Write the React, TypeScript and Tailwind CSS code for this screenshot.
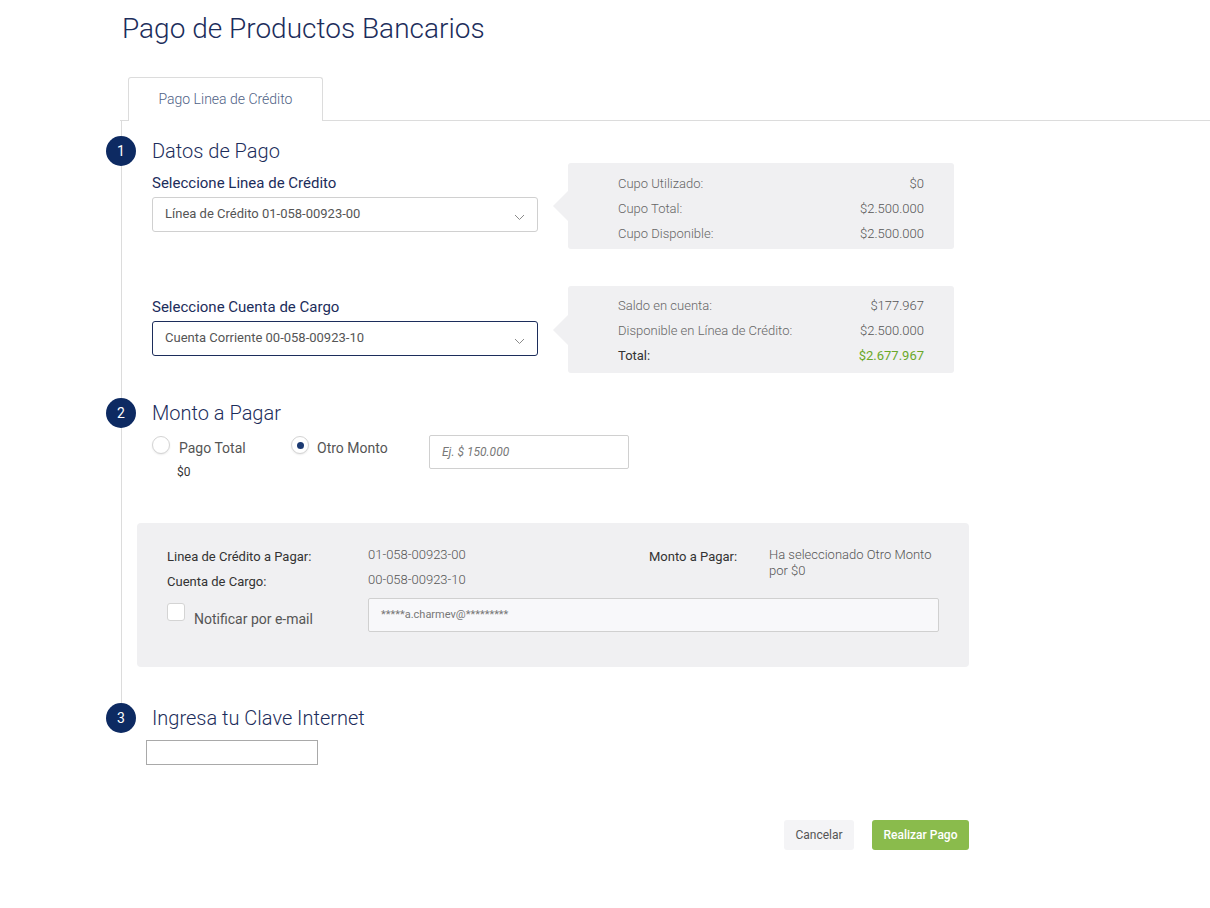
import React from 'react';

const Chevron = () => (
  <svg width="11" height="7" viewBox="0 0 11 7" fill="none" className="mt-[5px]">
    <polyline points="1,1 5.5,5.5 10,1" stroke="#8a8a8a" strokeWidth="1" />
  </svg>
);

const Step = ({ n, title }: { n: number; title: string }) => (
  <div className="flex items-center gap-4 h-[30px]">
    <div className="w-[30px] h-[30px] -ml-[16px] rounded-full bg-[#0d2a62] text-white text-[14px] flex items-center justify-center shrink-0">
      {n}
    </div>
    <h2 className="text-[20px] font-light text-[#1c2d5b] leading-[30px]">{title}</h2>
  </div>
);

const Select = ({ value, focused }: { value: string; focused?: boolean }) => (
  <div
    className={`mt-[5px] h-[35px] w-[386px] rounded-[3px] border flex items-center justify-between pl-[12px] pr-[12px] text-[13px] text-[#555] ${
      focused ? 'border-[#1c2d5b]' : 'border-[#d0d0d0]'
    }`}
  >
    <span className="-mt-[2px]">{value}</span>
    <Chevron />
  </div>
);

type Row = { label: string; value: string; strong?: boolean };

const InfoBox = ({ rows, height, pt }: { rows: Row[]; height: string; pt: string }) => (
  <div className="flex items-center">
    <div className="w-0 h-0 border-y-[15px] border-y-transparent border-r-[15px] border-r-[#f0f0f2]" />
    <div className={`w-[386px] ${height} ${pt} bg-[#f0f0f2] rounded-[3px] pl-[50px] pr-[30px]`}>
      {rows.map((r) => (
        <div key={r.label} className="flex justify-between h-[25px] items-center text-[13px]">
          <span className={r.strong ? 'text-[#333]' : 'text-[#666] font-light'}>{r.label}</span>
          <span className={r.strong ? 'text-[#6aa829]' : 'text-[#555] font-light'}>{r.value}</span>
        </div>
      ))}
    </div>
  </div>
);

const Radio = ({ checked }: { checked?: boolean }) => (
  <div className="w-[18px] h-[18px] rounded-full border border-[#d4d4d4] bg-white shadow-[0_1px_2px_rgba(0,0,0,0.08)] flex items-center justify-center shrink-0">
    {checked && <div className="w-[7px] h-[7px] rounded-full bg-[#1c3a72]" />}
  </div>
);

const App = () => {
  return (
    <div className="w-[1210px] min-h-[908px] bg-white font-['Roboto',sans-serif]">
      <div className="pl-[120px] pt-[12px]">
        <h1 className="ml-[2px] text-[28px] leading-[34px] font-light text-[#1c2d5b]">Pago de Productos Bancarios</h1>

        <div className="mt-[31px] h-[44px] border-b border-[#dcdcdc] pl-[8px] flex items-start">
          <div className="h-[44px] w-[195px] -mb-px bg-white border border-b-0 border-[#dcdcdc] rounded-t-[3px] flex items-center justify-center text-[14px] font-light text-[#4f6286]">
            Pago Linea de Crédito
          </div>
        </div>

        <div className="ml-px border-l border-[#dcdcdc] pb-[36px]">
          <div className="pt-[15px]">
            <Step n={1} title="Datos de Pago" />
          </div>

          <div className="pl-[30px] -mt-[3px] flex gap-[15px]">
            <div className="pt-[11px]">
              <div className="text-[15px] leading-[18px] text-[#1c2d5b]">Seleccione Linea de Crédito</div>
              <Select value="Línea de Crédito 01-058-00923-00" />
            </div>
            <InfoBox
              height="h-[86px]"
              pt="pt-[8px]"
              rows={[
                { label: 'Cupo Utilizado:', value: '$0' },
                { label: 'Cupo Total:', value: '$2.500.000' },
                { label: 'Cupo Disponible:', value: '$2.500.000' },
              ]}
            />
          </div>

          <div className="pl-[30px] mt-[37px] flex gap-[15px]">
            <div className="pt-[12px]">
              <div className="text-[15px] leading-[18px] text-[#1c2d5b]">Seleccione Cuenta de Cargo</div>
              <Select value="Cuenta Corriente 00-058-00923-10" focused />
            </div>
            <InfoBox
              height="h-[87px]"
              pt="pt-[7px]"
              rows={[
                { label: 'Saldo en cuenta:', value: '$177.967' },
                { label: 'Disponible en Línea de Crédito:', value: '$2.500.000' },
                { label: 'Total:', value: '$2.677.967', strong: true },
              ]}
            />
          </div>

          <div className="mt-[25px]">
            <Step n={2} title="Monto a Pagar" />
          </div>

          <div className="pl-[30px] mt-[7px] h-[46px] flex items-start">
            <div className="w-[139px] pt-px">
              <div className="flex items-start gap-[9px]">
                <Radio />
                <span className="text-[14px] leading-[18px] mt-[3px] text-[#555]">Pago Total</span>
              </div>
              <div className="pl-[25px] mt-[7px] text-[12px] leading-[16px] text-[#333]">$0</div>
            </div>
            <div className="w-[138px] pt-px">
              <div className="flex items-start gap-[8px]">
                <Radio checked />
                <span className="text-[14px] leading-[18px] mt-[3px] text-[#555]">Otro Monto</span>
              </div>
            </div>
            <div className="w-[200px] h-[34px] border border-[#d0d0d0] rounded-[2px] flex items-center pl-[12px] text-[12px] italic text-[#777]">
              Ej. $ 150.000
            </div>
          </div>

          <div className="ml-[15px] mt-[42px] w-[832px] h-[144px] bg-[#f0f0f2] rounded-[4px] px-[30px] pt-[21px]">
            <div className="flex">
              <div className="w-[482px]">
                <div className="flex h-[25px] items-center text-[13px]">
                  <span className="w-[201px] text-[#333]">Linea de Crédito a Pagar:</span>
                  <span className="text-[#555] font-light -mt-[3px]">01-058-00923-00</span>
                </div>
                <div className="flex h-[25px] items-center text-[13px]">
                  <span className="w-[201px] text-[#333]">Cuenta de Cargo:</span>
                  <span className="text-[#555] font-light -mt-[3px]">00-058-00923-10</span>
                </div>
              </div>
              <div className="flex text-[13px] pt-[4px]">
                <span className="w-[120px] text-[#333] leading-[16px] pt-[1px]">Monto a Pagar:</span>
                <span className="w-[170px] text-[#555] font-light leading-[16px] -mt-[1px]">
                  Ha seleccionado Otro Monto por $0
                </span>
              </div>
            </div>
            <div className="mt-[4px] flex items-center h-[34px]">
              <div className="w-[201px] flex items-start gap-[9px]">
                <div className="w-[18px] h-[18px] bg-white border border-[#d4d4d4] rounded-[3px] shrink-0" />
                <span className="text-[14px] leading-[18px] mt-[7px] text-[#555]">Notificar por e-mail</span>
              </div>
              <div className="flex-1 h-[34px] bg-[#f8f8fa] border border-[#d0d0d0] rounded-[2px] flex items-center pl-[12px] text-[11px] text-[#777]">
                *****a.charmev@*********
              </div>
            </div>
          </div>
        </div>

        <div className="pl-[2px]">
          <Step n={3} title="Ingresa tu Clave Internet" />
        </div>
        <div className="ml-[26px] mt-[7px] w-[172px] h-[25px] border border-[#a9a9a9]" />

        <div className="w-[849px] mt-[55px] flex justify-end gap-[18px]">
          <button className="w-[70px] h-[30px] bg-[#f4f4f6] rounded-[3px] text-[12px] text-[#555]">Cancelar</button>
          <button className="w-[97px] h-[30px] bg-[#8abb4c] rounded-[3px] text-[12px] font-medium text-white">
            Realizar Pago
          </button>
        </div>
      </div>
    </div>
  );
};

export default App;
